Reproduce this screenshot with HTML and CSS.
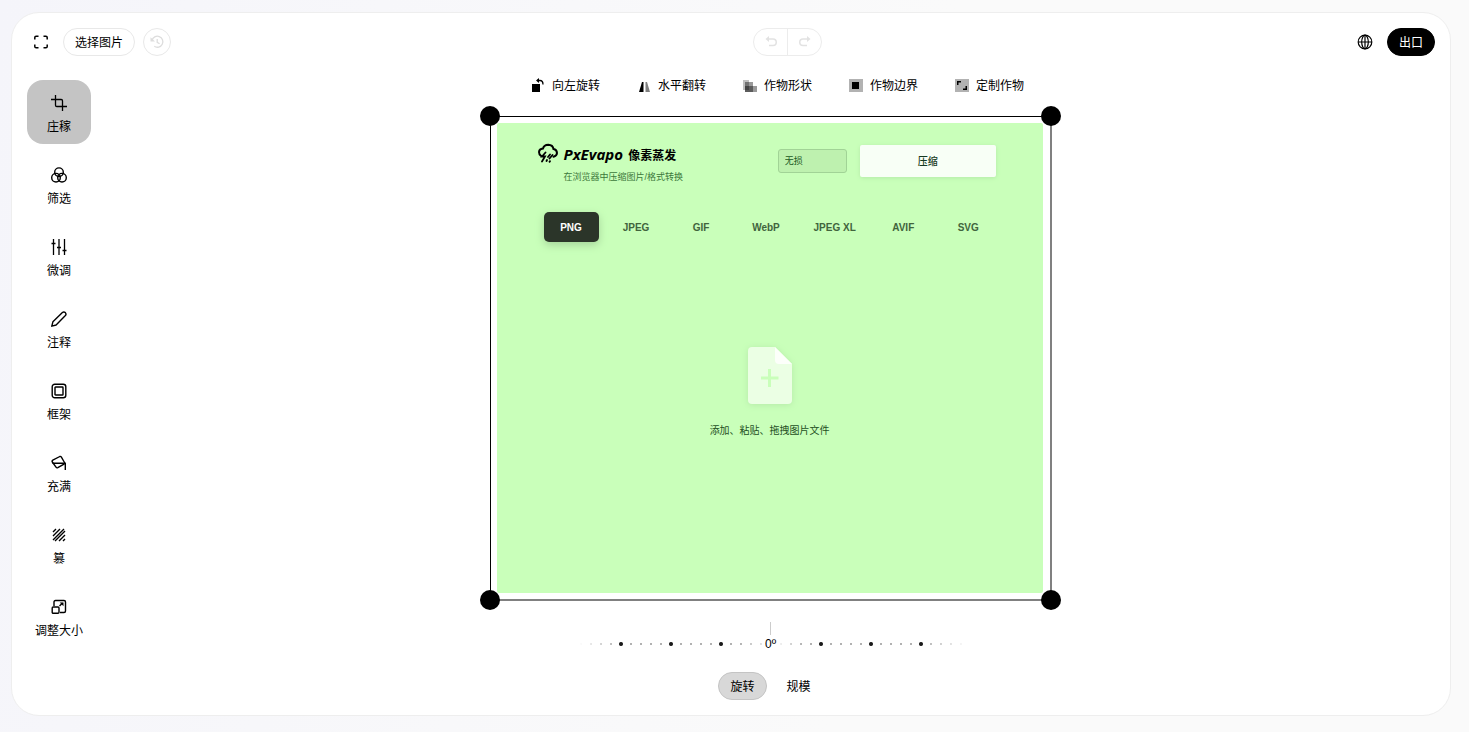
FILE: index.html
```html
<!DOCTYPE html>
<html lang="zh-CN">
<head>
<meta charset="utf-8">
<title>PxEvapo 像素蒸发</title>
<link rel="stylesheet" href="styles.css">
</head>
<body>
<div class="editor">
  <header class="topbar">
    <div class="topbar-start">
      <button class="icon-btn" type="button" aria-label="全屏"><svg class="icon" viewBox="0 0 16 16" fill="none" stroke="currentColor" stroke-width="1.500"><path d="M1.800 5.500V3.600q0-1.300 1.300-1.300H5.500M10.500 2.300h2.400q1.300 0 1.300 1.300V5.500M14.200 10.500v1.900q0 1.300-1.300 1.300H10.500M5.500 13.700H3.100q-1.300 0-1.300-1.300V10.500"/></svg></button>
      <button class="pill" type="button">选择图片</button>
      <button class="round" type="button" aria-label="还原" disabled><svg class="icon" viewBox="0 0 16 16" fill="none" stroke="currentColor" stroke-width="1.300"><path d="M3 6.500A5.500 5.500 0 1 1 5.300 12.300M8.200 5v3.300l2.400 1.500"/><path d="M1.500 3.200v4.300H6z" fill="currentColor" stroke="none"/></svg></button>
    </div>
    <div class="history">
      <button type="button" aria-label="撤销" disabled><svg class="icon" viewBox="0 0 16 16" fill="none" stroke="currentColor" stroke-width="1.500"><path d="M4 5h6a3.200 3.200 0 0 1 0 6.500H6"/><path d="M6 2v6L2.500 5z" fill="currentColor" stroke="none"/></svg></button>
      <button type="button" aria-label="重做" disabled><svg class="icon" viewBox="0 0 16 16" fill="none" stroke="currentColor" stroke-width="1.500"><path d="M12 5H6a3.200 3.200 0 0 0 0 6.500h4"/><path d="M10 2v6l3.500-3z" fill="currentColor" stroke="none"/></svg></button>
    </div>
    <div class="topbar-end">
      <button class="icon-btn" type="button" aria-label="语言"><svg class="icon" viewBox="0 0 16 16" fill="none" stroke="currentColor" stroke-width="1.200"><circle cx="8" cy="8" r="6.800"/><ellipse cx="8" cy="8" rx="3.300" ry="6.800"/><path d="M8 1.200v13.600M1.200 8h13.600"/></svg></button>
      <button class="pill pill-dark" type="button">出口</button>
    </div>
  </header>

  <div class="workspace">
    <nav class="tools">
      <button class="tool tool-active" type="button"><svg class="icon" viewBox="0 0 16 16" fill="none" stroke="currentColor" stroke-width="1.300"><path d="M0 4.500h10.200q1.300 0 1.300 1.300V16M4.500 0v10.200q0 1.300 1.300 1.300H16"/></svg>庄稼</button>
      <button class="tool" type="button"><svg class="icon" viewBox="0 0 16 16" fill="none" stroke="currentColor" stroke-width="1.400"><circle cx="8" cy="5.200" r="4.300"/><circle cx="5" cy="10.700" r="4.300"/><circle cx="11" cy="10.700" r="4.300"/></svg>筛选</button>
      <button class="tool" type="button"><svg class="icon" viewBox="0 0 16 16" fill="none" stroke="currentColor" stroke-width="1.300"><path d="M2.500 0v16M8 0v16M13.500 0v16"/><path d="M.5 4.500h4M6 8.500h4M11.500 11.500h4" stroke-width="1.600"/></svg>微调</button>
      <button class="tool" type="button"><svg class="icon" viewBox="0 0 16 16" fill="none" stroke="currentColor" stroke-width="1.400" stroke-linejoin="round"><path d="M.8 15.200l1.100-4.400 9.500-9.300q1.500-1.200 2.900.1 1.300 1.500.1 2.900l-9.300 9.500z"/></svg>注释</button>
      <button class="tool" type="button"><svg class="icon" viewBox="0 0 16 16" fill="none" stroke="currentColor" stroke-width="1.400"><rect x="1.200" y="1.200" width="13.600" height="13.600" rx="2.500"/><rect x="4" y="4" width="8" height="8" rx=".6"/></svg>框架</button>
      <button class="tool" type="button"><svg class="icon" viewBox="0 0 16 16" fill="none" stroke="currentColor" stroke-width="1.400" stroke-linejoin="round"><path d="M8.800 1.500q1-.4 1.600.6l3.100 5.400q.5 1-.5 1.600l-6.200 3.600q-1.100.5-1.800-.5L1.300 7q-.6-1.200.5-1.800z"/><path d="M1.500 8.200h12.800V15"/></svg>充满</button>
      <button class="tool" type="button"><svg class="icon" viewBox="0 0 16 16" fill="none" stroke="currentColor" stroke-width="1.400"><path d="M2 5l3-3M2 9l7-7M2 13L13 2M4 14L14 4M8 14l6-6M12 14l2-2"/></svg>篡</button>
      <button class="tool" type="button"><svg class="icon" viewBox="0 0 16 16" fill="none" stroke="currentColor" stroke-width="1.400"><path d="M3 7V3q0-1.500 1.500-1.500H13q1.500 0 1.500 1.500v9q0 1.500-1.500 1.500H9"/><rect x="1.200" y="8" width="6.800" height="6.300" rx="1"/><path d="M8.500 7l3-3"/><path d="M8.700 3.500h3.800v3.800z" fill="currentColor" stroke="none"/></svg>调整大小</button>
    </nav>

    <main class="stage">
      <div class="actions">
        <button type="button"><svg class="icon" viewBox="0 0 16 16"><path fill="currentColor" d="M2 6h8v8H2z"/><path d="M7 2.500h3q3 0 3 4" fill="none" stroke="currentColor" stroke-width="1.300"/><path fill="currentColor" d="M9 0v5L6 2.500z"/></svg>向左旋转</button>
        <button type="button"><svg class="icon" viewBox="0 0 16 16" fill="currentColor"><path d="M7.500 4v10H3L6 4z"/><path opacity=".5" d="M9.500 4H11l3 10H9.500z"/></svg>水平翻转</button>
        <button type="button"><svg class="icon" viewBox="0 0 16 16" fill="currentColor"><path opacity=".25" d="M1 2h6v10H1z"/><path opacity=".4" d="M3 4h8v10H3z"/><path opacity=".4" d="M3 8h12v6H3z"/></svg>作物形状</button>
        <button type="button"><svg class="icon" viewBox="0 0 16 16" fill="currentColor"><path opacity=".3" d="M1 1h14v13H1z"/><path d="M4 4h7v7H4z"/></svg>作物边界</button>
        <button type="button"><svg class="icon" viewBox="0 0 16 16" fill="currentColor"><path opacity=".3" d="M1 1h14v13H1z"/><path d="M3 3h4v1.500H4.500V7H3zM13 12H9v-1.500h2.500V8H13z"/></svg>定制作物</button>
      </div>

      <div class="crop">
        <button class="handle handle-tl" type="button" aria-label="左上"></button>
        <button class="handle handle-tr" type="button" aria-label="右上"></button>
        <button class="handle handle-bl" type="button" aria-label="左下"></button>
        <button class="handle handle-br" type="button" aria-label="右下"></button>
        <section class="picture">
          <div class="picture-head">
            <svg class="logo" viewBox="0 0 20 20" fill="none" stroke="currentColor" stroke-width="2" stroke-linecap="round"><path d="M3 12.800Q1 11.500 1 9 1.300 5.800 5 5.500 6 2 10.300 1.800 14.800 2 15.500 6 18.800 6.500 19 10 18.800 13 15.500 13.800"/><path d="M7.500 9.500l-3.500 4h3l-3 5M12 11.500l-2 2.500M9 17l-.5 1M14.500 12l-3 3.500M12 18.200l-.5.600" stroke-width="1.800"/></svg>
            <div class="brand">
              <h1><em>PxEvapo</em> 像素蒸发</h1>
              <p>在浏览器中压缩图片/格式转换</p>
            </div>
            <select class="quality" aria-label="压缩质量"><option>无损</option></select>
            <button class="compress" type="button">压缩</button>
          </div>
          <div class="formats">
            <button class="format-active" type="button">PNG</button>
            <button type="button">JPEG</button>
            <button type="button">GIF</button>
            <button type="button">WebP</button>
            <button type="button">JPEG XL</button>
            <button type="button">AVIF</button>
            <button type="button">SVG</button>
          </div>
          <div class="drop">
            <svg class="file" viewBox="0 0 44 57"><path fill="#ebffe4" d="M4 0h23l17 17v36q0 4-4 4H4q-4 0-4-4V4q0-4 4-4z"/><path fill="#fcfffa" d="M27 0l17 17H31q-4 0-4-4z"/><path fill="#c9ffba" d="M20 22h3v7.500h7.500v3H23V40h-3v-7.500h-7v-3h7z"/></svg>
            <p>添加、粘贴、拖拽图片文件</p>
          </div>
        </section>
      </div>

      <div class="gauge">
        <span class="needle"></span>
        <div class="scale">
          <input type="range" id="angle" min="-45" max="45" value="0">
          <label for="angle">0º</label>
        </div>
      </div>
      <div class="modes">
        <button class="mode mode-active" type="button">旋转</button>
        <button class="mode" type="button">规模</button>
      </div>
    </main>
  </div>
</div>
</body>
</html>
```

FILE: styles.css
```css
* {
  box-sizing: border-box;
}

body {
  margin: 0;
  min-height: 100vh;
  padding: 12px 18px 16px 11px;
  display: flex;
  background: linear-gradient(100deg, #f5f5fa, #fafafa 60%);
  font-family: "Liberation Sans", "Noto Sans CJK SC", sans-serif;
  font-size: 12px;
  line-height: 16px;
  color: #000;
}

button {
  margin: 0;
  padding: 0;
  border: 0;
  background: none;
  font: inherit;
  color: inherit;
  white-space: nowrap;
}

h1,
p {
  margin: 0;
}

svg {
  display: block;
  flex: none;
}

.icon {
  width: 16px;
  height: 16px;
}

.editor {
  flex: 1;
  display: flex;
  flex-direction: column;
  gap: 15px;
  padding: 15px;
  border: 1px solid #eee;
  border-radius: 28px;
  background: #fff;
}

.topbar {
  display: flex;
  justify-content: space-between;
}

.topbar-start,
.topbar-end {
  display: flex;
  gap: 8px;
}

.topbar-start {
  min-width: 198px;
}

.icon-btn,
.round {
  display: grid;
  place-items: center;
  width: 28px;
  height: 28px;
}

.round {
  border: 1px solid #e8e8e8;
  border-radius: 14px;
  color: #ddd;
}

.pill {
  height: 28px;
  padding: 2px 11px 0;
  border: 1px solid #e8e8e8;
  border-radius: 14px;
}

.pill-dark {
  border-color: #000;
  background: #000;
  color: #fff;
}

.history {
  display: flex;
  border: 1px solid #ececec;
  border-radius: 14px;
  color: #e2e2e2;
}

.history button {
  display: grid;
  place-items: center;
  width: 33px;
}

.history button + button {
  width: 34px;
  border-left: 1px solid #ececec;
}

.workspace {
  flex: 1;
  display: flex;
  gap: 15px;
}

.tools {
  display: flex;
  flex-direction: column;
  gap: 8px;
  padding-top: 9px;
}

.tool {
  display: flex;
  flex-direction: column;
  align-items: center;
  gap: 8px;
  width: 64px;
  height: 64px;
  padding-top: 15px;
  border-radius: 16px;
}

.tool-active {
  background: #c4c4c4;
}

.stage {
  flex: 1;
  display: flex;
  flex-direction: column;
  align-items: center;
}

.actions {
  display: flex;
  gap: 36px;
  padding-left: 13px;
}

.actions button {
  display: flex;
  align-items: center;
  gap: 6px;
  height: 28px;
  padding-top: 2px;
}

.crop {
  position: relative;
  flex: 1;
  display: flex;
  width: 100%;
  max-width: 562px;
  margin-top: 17px;
  padding: 6px 7px 6px 6px;
  border: solid #000;
  border-width: 1px 2px 2px 1px;
  border-right-color: #808080;
  border-bottom-color: #808080;
}

.handle {
  position: absolute;
  width: 20px;
  height: 20px;
  border-radius: 50%;
  background: #000;
}

.handle-tl {
  top: -11px;
  left: -11px;
}

.handle-tr {
  top: -11px;
  right: -11px;
}

.handle-bl {
  bottom: -11px;
  left: -11px;
}

.handle-br {
  right: -11px;
  bottom: -11px;
}

.picture {
  flex: 1;
  padding: 20px 47px 20px 41px;
  border-radius: 2px;
  background: #c9ffba;
}

.picture-head {
  display: flex;
  align-items: flex-start;
  color: #000;
}

.logo {
  width: 20px;
  height: 20px;
}

.brand {
  flex: 1;
  padding-left: 6px;
}

.brand h1 {
  font-family: "Open Sans", "Noto Sans CJK SC", sans-serif;
  font-size: 12px;
  line-height: 22px;
  font-weight: 700;
}

.brand em {
  margin-right: 2px;
  font-size: 15px;
}

.brand p {
  font-size: 9px;
  line-height: 20px;
  color: #3c783a;
}

.quality {
  appearance: none;
  width: 69px;
  height: 24px;
  margin: 6px 13px 0 0;
  padding: 0 6px;
  border: 1px solid #a1d396;
  border-radius: 3px;
  background: #bef1af;
  font: inherit;
  font-size: 9px;
  color: #20591f;
}

.compress {
  width: 136px;
  height: 32px;
  margin-top: 2px;
  padding-top: 2px;
  border-radius: 2px;
  background: #f8fff6;
  box-shadow: 0 1px 4px #b5eaa8;
  font-size: 10px;
  font-weight: 500;
  color: #163a22;
}

.formats {
  display: flex;
  gap: 10px;
  margin: 25px 0 0 6px;
  font-size: 10px;
  font-weight: 700;
  color: #41643d;
}

.formats button {
  min-width: 55px;
  height: 30px;
  padding: 1px 10px 0;
  border-radius: 5px;
}

.formats .format-active {
  background: #2b3529;
  box-shadow: 0 3px 8px #a5d49a;
  color: #fff;
}

.drop {
  display: flex;
  flex-direction: column;
  align-items: center;
  gap: 19px;
  margin: 105px 0 0 6px;
  font-size: 10px;
  color: #24501f;
}

.file {
  width: 44px;
  height: 57px;
  filter: drop-shadow(0 1px 3px #b5eaa8);
}

.gauge {
  display: flex;
  flex-direction: column;
  align-items: center;
  gap: 1px;
  margin: 21px 0 20px;
}

.needle {
  width: 1px;
  height: 13px;
  background: #ccc;
}

.scale {
  display: grid;
  place-items: center;
}

.scale > * {
  grid-area: 1 / 1;
}

.scale input {
  appearance: none;
  width: 400px;
  height: 10px;
  margin: 0;
  background:
    radial-gradient(circle, #1a1a1a 1.5px, transparent 2.5px) -25px 0 / 50px 10px,
    radial-gradient(circle, #555 0, transparent 1.3px) -5px 0 / 10px 10px;
  mask: linear-gradient(90deg, transparent 2%, #000 12%, #000 42%, transparent 51%, #000 58%, #000 88%, transparent 99%);
}

.scale input::-webkit-slider-thumb {
  appearance: none;
  width: 10px;
  height: 10px;
}

.scale label {
  position: relative;
  background: #fff;
}

.modes {
  display: flex;
  gap: 8px;
}

.mode {
  height: 28px;
  padding: 2px 11px 0;
  border: 1px solid transparent;
  border-radius: 14px;
}

.mode-active {
  border-color: #c4c4c4;
  background: #d8d8d8;
}
```
